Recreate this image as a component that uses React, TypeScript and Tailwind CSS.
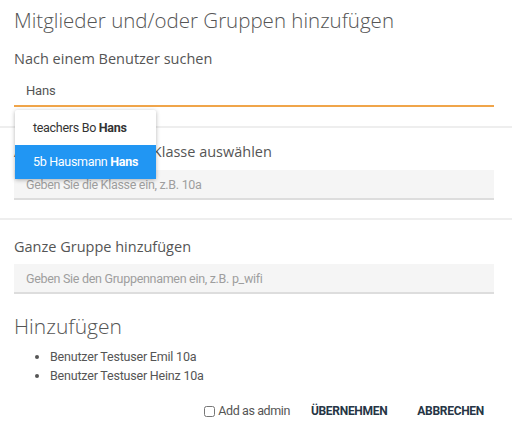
import { useState } from 'react';

const sans = { fontFamily: '"Open Sans", "Liberation Sans", sans-serif' };
const narrow = "[font-family:Roboto,'Liberation_Sans',sans-serif]";

export default function App() {
  const [query, setQuery] = useState('Hans');
  const [admin, setAdmin] = useState(false);

  const members = ['Benutzer Testuser Emil 10a', 'Benutzer Testuser Heinz 10a'];

  return (
    <div className="w-[512px] bg-white text-[#555]" style={sans}>
      {/* Benutzer suchen */}
      <div className="px-[14px] pt-[6px]">
        <h2 className="text-[20.5px] font-light leading-[28px] text-[#555]">Mitglieder und/oder Gruppen hinzufügen</h2>
        <label className="mt-[14px] block text-[14.5px] leading-[22px]">Nach einem Benutzer suchen</label>
        <div className="relative mt-[5px] w-[480px]">
          <input
            value={query}
            onChange={(e) => setQuery(e.target.value)}
            className={`h-[32px] w-full border-b-2 border-[#f0a54a] bg-transparent px-[12px] text-[13px] tracking-[-0.2px] text-[#555] outline-none ${narrow}`}
          />
          <ul className={`absolute left-[1px] top-[35px] z-10 w-[141px] rounded-[2px] bg-white text-[12.5px] tracking-[-0.3px] shadow-[0_1px_4px_rgba(0,0,0,0.3)] ${narrow}`}>
            <li className="h-[35px] whitespace-nowrap px-[18px] leading-[35px] text-[#333]">
              teachers Bo <b>Hans</b>
            </li>
            <li className="h-[34px] whitespace-nowrap bg-[#2196f3] px-[18px] leading-[34px] text-white">
              5b Hausmann <b>Hans</b>
            </li>
          </ul>
        </div>
      </div>

      <div className="mt-[19px] h-[2px] bg-[#eeeeee]" />

      {/* Klasse */}
      <div className="px-[14px] pt-[13px]">
        <label className="block text-[14.5px] leading-[22px]">Alle Mitglieder einer Klasse auswählen</label>
        <input
          placeholder="Geben Sie die Klasse ein, z.B. 10a"
          className={`mt-[7px] h-[30px] w-[480px] border-b-2 border-[#dddddd] bg-[#f5f5f5] px-[12px] text-[12.5px] tracking-[-0.3px] outline-none placeholder:text-[#9e9e9e] ${narrow}`}
        />
      </div>

      <div className="mt-[18px] h-[2px] bg-[#eeeeee]" />

      {/* Gruppe */}
      <div className="px-[14px] pt-[16px]">
        <label className="block text-[14.5px] leading-[22px]">Ganze Gruppe hinzufügen</label>
        <input
          placeholder="Geben Sie den Gruppennamen ein, z.B. p_wifi"
          className={`mt-[6px] h-[30px] w-[480px] border-b-2 border-[#dddddd] bg-[#f5f5f5] px-[12px] text-[12.5px] tracking-[-0.3px] outline-none placeholder:text-[#9e9e9e] ${narrow}`}
        />

        <h2 className="mt-[18px] text-[21px] font-light leading-[28px] text-[#555]">Hinzufügen</h2>
        <ul className={`mt-[7px] list-disc pl-[36px] text-[12.5px] leading-[19px] tracking-[-0.2px] ${narrow}`}>
          {members.map((m) => (
            <li key={m}>{m}</li>
          ))}
        </ul>

        <div className="mt-[17px] flex w-[480px] items-center justify-end">
          <label className={`flex items-center gap-[3px] text-[12.5px] tracking-[-0.4px] ${narrow}`}>
            <input type="checkbox" checked={admin} onChange={(e) => setAdmin(e.target.checked)} className="h-[11px] w-[11px]" />
            Add as admin
          </label>
          <button className={`ml-[11px] px-[10px] text-[12px] font-bold tracking-[-0.3px] text-[#263545] ${narrow}`}>ÜBERNEHMEN</button>
          <button className={`ml-[10px] px-[10px] text-[12px] font-bold tracking-[-0.3px] text-[#263545] ${narrow}`}>ABBRECHEN</button>
        </div>
      </div>
    </div>
  );
}
